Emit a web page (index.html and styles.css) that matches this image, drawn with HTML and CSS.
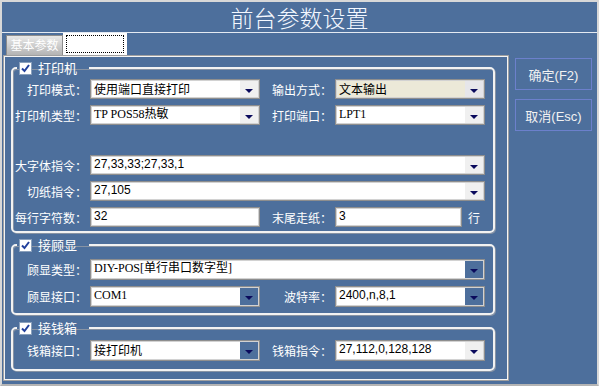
FILE: index.html
```html
<!DOCTYPE html>
<html lang="zh-CN">
<head>
  <meta charset="UTF-8">
  <title>前台参数设置</title>
  <link rel="stylesheet" href="styles.css">
</head>
<body>
  <div class="window">
    <div class="titlebar">前台参数设置</div>

    <div class="tabs">
      <span class="tab tab-active">基本参数</span>
      <span class="tab tab-blank"><span class="focus-box"></span></span>
    </div>

    <div class="main">
      <div class="panel">
        <fieldset class="group group-printer">
          <legend>
            <svg class="check" width="13" height="13" viewBox="0 0 13 13"><rect x="0.5" y="0.5" width="12" height="12" fill="#fff" stroke="#8aa0bc"/><path d="M3 6.5 L5.5 9 L10 3" fill="none" stroke="#22409c" stroke-width="2"/></svg>
            打印机
          </legend>
          <div class="row">
            <span class="lbl">打印模式：</span>
            <div class="combo w170"><span class="val">使用端口直接打印</span><span class="drop"></span></div>
            <span class="lbl lbl2">输出方式：</span>
            <div class="combo combo-beige w150"><span class="val">文本输出</span><span class="drop drop-beige"></span></div>
          </div>
          <div class="row">
            <span class="lbl">打印机类型：</span>
            <div class="combo w170"><span class="val serif">TP POS58热敏</span><span class="drop"></span></div>
            <span class="lbl lbl2">打印端口：</span>
            <div class="combo w150"><span class="val serif">LPT1</span><span class="drop"></span></div>
          </div>
          <div class="spacer"></div>
          <div class="row">
            <span class="lbl">大字体指令：</span>
            <div class="combo wfull"><span class="val sans">27,33,33;27,33,1</span><span class="drop"></span></div>
          </div>
          <div class="row">
            <span class="lbl">切纸指令：</span>
            <div class="combo wfull"><span class="val sans">27,105</span><span class="drop"></span></div>
          </div>
          <div class="row">
            <span class="lbl">每行字符数：</span>
            <div class="combo w170"><span class="val sans">32</span></div>
            <span class="lbl lbl2">末尾走纸：</span>
            <div class="combo w127"><span class="val sans">3</span></div>
            <span class="unit">行</span>
          </div>
        </fieldset>

        <fieldset class="group group-display">
          <legend>
            <svg class="check" width="13" height="13" viewBox="0 0 13 13"><rect x="0.5" y="0.5" width="12" height="12" fill="#fff" stroke="#8aa0bc"/><path d="M3 6.5 L5.5 9 L10 3" fill="none" stroke="#22409c" stroke-width="2"/></svg>
            接顾显
          </legend>
          <div class="row tall">
            <span class="lbl">顾显类型：</span>
            <div class="combo wfull"><span class="val serif">DIY-POS[单行串口数字型]</span><span class="drop drop-blue"></span></div>
          </div>
          <div class="row tall gap-more">
            <span class="lbl">顾显接口：</span>
            <div class="combo w170"><span class="val serif">COM1</span><span class="drop drop-blue"></span></div>
            <span class="lbl lbl2">波特率：</span>
            <div class="combo w150"><span class="val sans">2400,n,8,1</span><span class="drop drop-blue"></span></div>
          </div>
        </fieldset>

        <fieldset class="group group-drawer">
          <legend>
            <svg class="check" width="13" height="13" viewBox="0 0 13 13"><rect x="0.5" y="0.5" width="12" height="12" fill="#fff" stroke="#8aa0bc"/><path d="M3 6.5 L5.5 9 L10 3" fill="none" stroke="#22409c" stroke-width="2"/></svg>
            接钱箱
          </legend>
          <div class="row tall">
            <span class="lbl">钱箱接口：</span>
            <div class="combo w170"><span class="val">接打印机</span><span class="drop drop-blue"></span></div>
            <span class="lbl lbl2">钱箱指令：</span>
            <div class="combo w150"><span class="val sans">27,112,0,128,128</span><span class="drop"></span></div>
          </div>
        </fieldset>
      </div>

      <div class="actions">
        <button class="btn">确定(F2)</button>
        <button class="btn">取消(Esc)</button>
      </div>
    </div>
  </div>
</body>
</html>
```

FILE: styles.css
```css
body {
  margin: 0;
  padding: 0;
  background: #ffffff;
  font-family: "Noto Sans CJK SC", sans-serif;
}

.window {
  width: 599px;
  height: 386px;
  box-sizing: border-box;
  border: 2px solid #d8d8d8;
  border-bottom-color: #b4b4b4;
  background: #4d6f9c;
  color: #ffffff;
}

.titlebar {
  height: 30px;
  line-height: 30px;
  text-align: center;
  font-size: 23px;
  font-weight: 300;
  color: #f4f8ff;
  border-bottom: 1px solid #e4eaf2;
}

.tabs {
  display: flex;
  align-items: flex-end;
  height: 22px;
  padding-left: 4px;
}

.tab {
  box-sizing: border-box;
  font-size: 12px;
}

.tab-active {
  width: 57px;
  height: 20px;
  line-height: 18px;
  text-align: center;
  color: #ffffff;
  background: linear-gradient(#e8e8e8, #b4b4b4);
  border: 1px solid #8c8c8c;
  border-bottom: none;
}

.tab-blank {
  width: 64px;
  height: 22px;
  padding: 2px 3px;
  background: #ffffff;
}

.focus-box {
  display: block;
  height: 100%;
  box-sizing: border-box;
  border: 1px dotted #000000;
}

.main {
  display: flex;
  align-items: flex-start;
}

.panel {
  width: 506px;
  height: 326px;
  margin-left: 1px;
  box-sizing: border-box;
  padding: 5px 0 0 7px;
  border: 1px solid #a0a0a0;
  box-shadow: inset 0 0 0 1px #f4f4f4;
}

.group {
  width: 484px;
  box-sizing: border-box;
  margin: 0;
  padding: 0 0 4px 0;
  border: 2px solid #f2f2f2;
  border-radius: 5px;
  box-shadow: 1px 1px 0 #8793a4, inset 1px 1px 0 #8793a4;
}

.group legend {
  display: flex;
  align-items: center;
  gap: 6px;
  height: 14px;
  margin-left: 4px;
  padding: 0 12px 0 2px;
  font-size: 13px;
  line-height: 14px;
  color: #ffffff;
}

.group-printer {
  padding-top: 4px;
}

.group-display {
  margin-top: 5px;
  padding-top: 7px;
  padding-bottom: 6px;
}

.group-drawer {
  margin-top: 6px;
  padding-top: 5px;
  padding-bottom: 8px;
}

.row {
  display: flex;
  align-items: center;
  height: 20px;
  margin-bottom: 6px;
}

.row:last-child {
  margin-bottom: 0;
}

.row.tall {
  height: 21px;
}

.row.gap-more {
  margin-top: 4px;
}

.spacer {
  height: 24px;
}

.lbl {
  width: 74px;
  margin-right: 3px;
  text-align: right;
  font-size: 12px;
  white-space: nowrap;
}

.lbl2 {
  width: 72px;
}

.unit {
  margin-left: 6px;
  font-size: 12px;
}

.combo {
  display: flex;
  height: 100%;
  box-sizing: border-box;
  border: 1px solid #8e8e8e;
  box-shadow: inset 0 0 0 1px #d2d2d2;
  background: #ffffff;
  color: #000000;
}

.combo-beige {
  background: #ece9d8;
}

.w170 { width: 170px; }
.w150 { width: 150px; }
.w127 { width: 127px; }
.wfull { width: 395px; }

.val {
  flex: 1;
  padding: 1px 2px 0 3px;
  font-size: 12px;
  line-height: 15px;
  white-space: nowrap;
  overflow: hidden;
}

.serif {
  font-family: "Liberation Serif", "Noto Sans CJK SC", serif;
}

.sans {
  font-family: "Liberation Sans", "Noto Sans CJK SC", sans-serif;
}

.drop {
  display: flex;
  align-items: center;
  justify-content: center;
  width: 18px;
  margin: 1px 1px 1px 0;
  background: #f0f0f0;
}

.drop::after {
  content: "";
  margin-top: 3px;
  border-left: 4px solid transparent;
  border-right: 4px solid transparent;
  border-top: 4px solid #0a0a5c;
}

.drop-blue {
  background: #4d6f9c;
}

.drop-beige {
  background: #e6e6ea;
}

.actions {
  display: flex;
  flex-direction: column;
  gap: 9px;
  margin: 3px 0 0 6px;
}

.btn {
  width: 77px;
  height: 32px;
  padding: 0;
  border: 1px solid #6c80cc;
  background: #4d6f9c;
  color: #f2f2f2;
  font-family: "Liberation Sans", "Noto Sans CJK SC", sans-serif;
  font-size: 13px;
  cursor: pointer;
}
```
